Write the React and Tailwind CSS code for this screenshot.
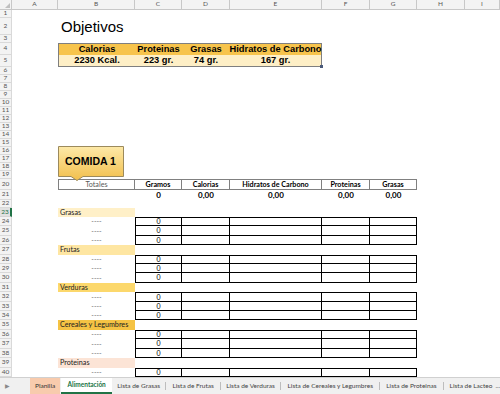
import React from "react";

const GRID = "grid grid-cols-[12px_46px_77px_47px_48px_92px_48px_47px_48px_1fr]";
const CAL = "font-['Lato','Open_Sans',sans-serif]";
const ARIAL = "font-['Liberation_Sans',Arial,sans-serif]";

function RH({ n, sel }) {
  return sel ? (
    <div className="flex items-center justify-center bg-[#e1e1e1] border-b border-[#d4d4d4] border-r-2 border-r-[#217346] text-[#217346] text-[6.5px] leading-none">
      {n}
    </div>
  ) : (
    <div className="flex items-center justify-center bg-[#f3f3f3] border-b border-r border-[#d9d9d9] text-[#555] text-[6.5px] leading-none">
      {n}
    </div>
  );
}

function Row({ n, h, sel, children }) {
  return (
    <div className={`${GRID} ${h}`}>
      <RH n={n} sel={sel} />
      {children}
    </div>
  );
}

function ItemRow({ n, h, first }) {
  const t = first ? " border-t" : "";
  return (
    <Row n={n} h={h}>
      <div />
      <div className="flex items-center justify-center text-[#6f6f6f] text-[7px] leading-none">----</div>
      <div className={`flex items-center justify-center border-l border-r border-b border-[#7a7a7a]${t} text-[7px] leading-none text-black`}>0</div>
      <div className={`border-r border-b border-[#7a7a7a]${t}`} />
      <div className={`border-r border-b border-[#7a7a7a]${t}`} />
      <div className={`border-r border-b border-[#7a7a7a]${t}`} />
      <div className={`border-r border-b border-[#7a7a7a]${t}`} />
    </Row>
  );
}

function LabelRow({ n, h, label, bg }) {
  return (
    <Row n={n} h={h}>
      <div />
      <div className={`flex items-center pl-[2px] ${bg} text-[7.2px] leading-none text-[#222] whitespace-nowrap`}>{label}</div>
    </Row>
  );
}

function EmptyRow({ n, h }) {
  return <Row n={n} h={h} />;
}

const letters = ["A", "B", "C", "D", "E", "F", "G", "H", "I"];

export default function App() {
  return (
    <div className={`w-[500px] h-[394px] overflow-hidden bg-white relative ${CAL}`}>
      {/* column headers */}
      <div className={`${GRID} h-[10px]`}>
        <div className="relative bg-[#f3f3f3] border-r border-b border-[#c8c8c8]">
          <svg className="absolute right-[1px] bottom-[1px]" width="5" height="5" viewBox="0 0 5 5">
            <polygon points="5,0 5,5 0,5" fill="#c0c0c0" />
          </svg>
        </div>
        {letters.map((l) => (
          <div key={l} className="flex items-center justify-center bg-[#f3f3f3] border-r border-b border-[#c8c8c8] text-[6.5px] leading-none text-[#555]">
            {l}
          </div>
        ))}
      </div>

      <EmptyRow n={1} h="h-[8px]" />
      <Row n={2} h="h-[17px]">
        <div />
        <div className={`flex items-center pl-[3px] whitespace-nowrap ${ARIAL} text-[15px] leading-none text-black`}>Objetivos</div>
      </Row>
      <EmptyRow n={3} h="h-[8px]" />
      <Row n={4} h="h-[12px]">
        <div />
        <div className={`flex items-center justify-center bg-[#f7c44c] border-t border-l border-[#7f7f7f] ${ARIAL} font-bold text-[9.3px] leading-none`}>Calorias</div>
        <div className={`flex items-center justify-center bg-[#f7c44c] border-t border-[#7f7f7f] ${ARIAL} font-bold text-[9.3px] leading-none`}>Proteinas</div>
        <div className={`flex items-center justify-center bg-[#f7c44c] border-t border-[#7f7f7f] ${ARIAL} font-bold text-[9.3px] leading-none`}>Grasas</div>
        <div className={`flex items-center justify-center bg-[#f7c44c] border-t border-r border-[#7f7f7f] ${ARIAL} font-bold text-[9.3px] leading-none whitespace-nowrap`}>Hidratos de Carbono</div>
      </Row>
      <Row n={5} h="h-[12px]">
        <div />
        <div className={`flex items-center justify-center bg-[#feefc6] border-b border-l border-[#7f7f7f] ${ARIAL} font-bold text-[9.3px] leading-none`}>2230 Kcal.</div>
        <div className={`flex items-center justify-center bg-[#feefc6] border-b border-[#7f7f7f] ${ARIAL} font-bold text-[9.3px] leading-none`}>223 gr.</div>
        <div className={`flex items-center justify-center bg-[#feefc6] border-b border-[#7f7f7f] ${ARIAL} font-bold text-[9.3px] leading-none`}>74 gr.</div>
        <div className={`relative flex items-center justify-center bg-[#feefc6] border-b border-r border-[#7f7f7f] ${ARIAL} font-bold text-[9.3px] leading-none`}>
          167 gr.
          <div className="absolute right-[-2px] bottom-[-2px] w-[3px] h-[3px] bg-[#4a5a7a]" />
        </div>
      </Row>
      {[6, 7, 8, 9, 10, 11, 12, 13, 14, 15, 16, 17, 18, 19].map((n) => (
        <EmptyRow key={n} n={n} h="h-[8px]" />
      ))}
      <Row n={20} h="h-[11px]">
        <div />
        <div className="flex items-center justify-center border border-[#808080] text-[7.2px] leading-none text-[#595959]">Totales</div>
        <div className="flex items-center justify-center border-t border-b border-r border-[#808080] text-[7.2px] font-bold leading-none">Gramos</div>
        <div className="flex items-center justify-center border-t border-b border-r border-[#808080] text-[7.2px] font-bold leading-none">Calorias</div>
        <div className="flex items-center justify-center border-t border-b border-r border-[#808080] text-[7.2px] font-bold leading-none whitespace-nowrap">Hidratos de Carbono</div>
        <div className="flex items-center justify-center border-t border-b border-r border-[#808080] text-[7.2px] font-bold leading-none">Proteinas</div>
        <div className="flex items-center justify-center border-t border-b border-r border-[#808080] text-[7.2px] font-bold leading-none">Grasas</div>
      </Row>
      <Row n={21} h="h-[10px]">
        <div />
        <div />
        <div className="flex items-center justify-center text-[8px] font-bold leading-none">0</div>
        <div className="flex items-center justify-center text-[8px] font-bold leading-none">0,00</div>
        <div className="flex items-center justify-center text-[8px] font-bold leading-none">0,00</div>
        <div className="flex items-center justify-center text-[8px] font-bold leading-none">0,00</div>
        <div className="flex items-center justify-center text-[8px] font-bold leading-none">0,00</div>
      </Row>
      <EmptyRow n={22} h="h-[8px]" />
      <Row n={23} h="h-[9px]" sel>
        <div />
        <div className="flex items-center pl-[2px] bg-[#fff0c8] text-[7.2px] leading-none text-[#222]">Grasas</div>
      </Row>
      <ItemRow n={24} h="h-[9px]" first />
      <ItemRow n={25} h="h-[10px]" />
      <ItemRow n={26} h="h-[9px]" />
      <LabelRow n={27} h="h-[10px]" label="Frutas" bg="bg-[#fee6a2]" />
      <ItemRow n={28} h="h-[9px]" first />
      <ItemRow n={29} h="h-[9px]" />
      <ItemRow n={30} h="h-[10px]" />
      <LabelRow n={31} h="h-[9px]" label="Verduras" bg="bg-[#fcd86c]" />
      <ItemRow n={32} h="h-[10px]" first />
      <ItemRow n={33} h="h-[9px]" />
      <ItemRow n={34} h="h-[9px]" />
      <LabelRow n={35} h="h-[10px]" label="Cereales y Legumbres" bg="bg-[#f5c344]" />
      <ItemRow n={36} h="h-[9px]" first />
      <ItemRow n={37} h="h-[10px]" />
      <ItemRow n={38} h="h-[9px]" />
      <LabelRow n={39} h="h-[10px]" label="Proteinas" bg="bg-[#fce4d6]" />
      <ItemRow n={40} h="h-[9px]" first />

      {/* sheet tabs */}
      <div className="flex h-[17px] items-stretch bg-[#f0f0f0] border-t border-[#d0d0d0] text-[6.5px] text-[#444] leading-none">
        <div className="w-[30px] flex items-center pl-[5px] text-[#8a8a8a] text-[6px]">▶</div>
        <div className="w-[31px] flex items-center justify-center bg-[#f8cbad] text-[#333]">Planilla</div>
        <div className="w-[51px] ml-[1px] flex items-center justify-center bg-white text-[#217346] font-bold border-b-2 border-[#217346]">Alimentación</div>
        <div className="w-[54px] flex items-center justify-center whitespace-nowrap">Lista de Grasas</div>
        <div className="w-px my-[4px] bg-[#bdbdbd]" />
        <div className="w-[54px] flex items-center justify-center whitespace-nowrap">Lista de Frutas</div>
        <div className="w-px my-[4px] bg-[#bdbdbd]" />
        <div className="w-[60px] flex items-center justify-center whitespace-nowrap">Lista de Verduras</div>
        <div className="w-px my-[4px] bg-[#bdbdbd]" />
        <div className="w-[99px] flex items-center justify-center whitespace-nowrap">Lista de Cereales y Legumbres</div>
        <div className="w-px my-[4px] bg-[#bdbdbd]" />
        <div className="w-[63px] flex items-center justify-center whitespace-nowrap">Lista de Proteinas</div>
        <div className="w-px my-[4px] bg-[#bdbdbd]" />
        <div className="flex-1 flex items-center pl-[6px] gap-[3px] whitespace-nowrap">
          <span>Lista de Lacteo</span>
          <span>...</span>
        </div>
      </div>

      {/* COMIDA 1 callout */}
      <div className="absolute left-[58px] top-[146px] w-[67px] h-[35px]">
        <svg width="67" height="35" viewBox="0 0 67 35" className="absolute inset-0">
          <defs>
            <linearGradient id="g" x1="0" y1="0" x2="0" y2="1">
              <stop offset="0" stopColor="#fde9a8" />
              <stop offset="1" stopColor="#f2bf4c" />
            </linearGradient>
          </defs>
          <path d="M0.5,0.5 H65.5 V30.5 H25 L19,34.5 L13,30.5 H0.5 Z" fill="url(#g)" stroke="#9c8a5c" strokeWidth="1" />
        </svg>
        <div className={`absolute left-[7px] top-[10px] ${ARIAL} font-bold text-[10.5px] leading-none text-black whitespace-nowrap`}>COMIDA 1</div>
      </div>
    </div>
  );
}
